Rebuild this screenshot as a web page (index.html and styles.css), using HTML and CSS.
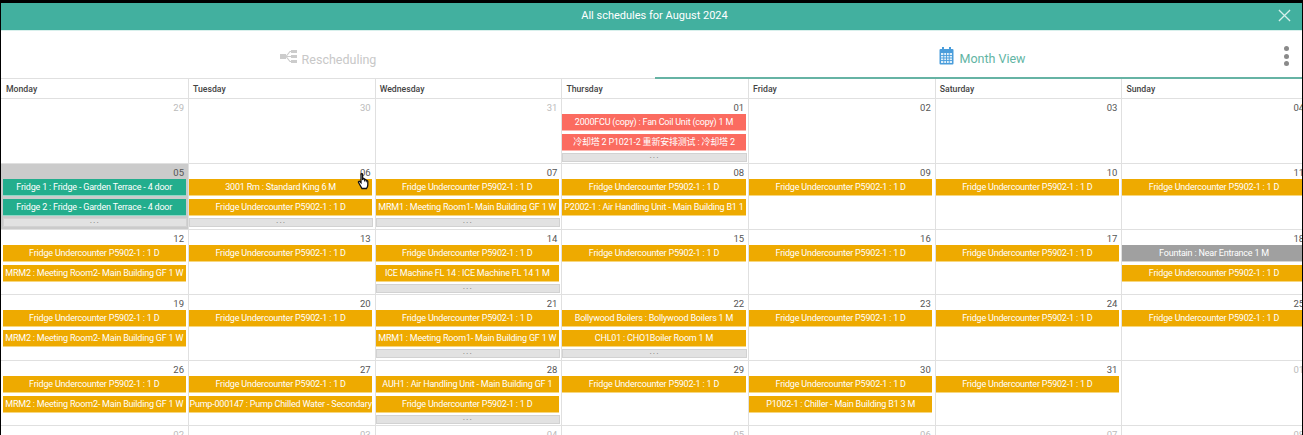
FILE: index.html
```html
<!DOCTYPE html>
<html lang="en">
<head>
    <meta charset="UTF-8">
    <meta name="viewport" content="width=device-width, initial-scale=1.0">
    <title>All schedules for August 2024</title>
    <link rel="stylesheet" href="styles.css">
</head>
<body>

<div class="app">
    <div class="title-bar">
        <span>All schedules for August 2024</span>
        <svg class="close" viewBox="0 0 14 14"><path d="M1 1L13 13M13 1L1 13"/></svg>
    </div>

    <div class="tabs">
        <div class="tab">
            <svg class="tab-icon" width="17" height="15" viewBox="0 0 17 15">
                <rect x="0" y="5" width="6" height="5" fill="#ccc"/>
                <path d="M6 7.5L10 2.5H12M6 7.5H12M6 7.5L10 12.5H12" fill="none" stroke="#ccc" stroke-width="1.2"/>
                <rect x="11" y="1" width="6" height="3" fill="#ccc"/>
                <rect x="11" y="6" width="6" height="3" fill="#ccc"/>
                <rect x="11" y="11" width="6" height="3" fill="#ccc"/>
            </svg>
            Rescheduling
        </div>
        <div class="tab active">
            <svg class="tab-icon" width="15" height="18" viewBox="0 0 15 18">
                <rect x="0.5" y="2" width="14" height="15.5" rx="1" fill="#4a9ddb"/>
                <rect x="3" y="0" width="2" height="4" fill="#4a9ddb"/>
                <rect x="10" y="0" width="2" height="4" fill="#4a9ddb"/>
                <rect x="2" y="6" width="11" height="10" fill="#dff0fa"/>
                <path d="M2 8.5H13M2 11H13M2 13.5H13M4.75 6V16M7.5 6V16M10.25 6V16" stroke="#4a9ddb" stroke-width="0.9"/>
            </svg>
            Month View
        </div>
        <div class="menu-dots"><i></i><i></i><i></i></div>
    </div>

    <div class="week-head">
        <div>Monday</div>
        <div>Tuesday</div>
        <div>Wednesday</div>
        <div>Thursday</div>
        <div>Friday</div>
        <div>Saturday</div>
        <div>Sunday</div>
    </div>

    <div class="week">
        <div class="day"><div class="num off">29</div></div>
        <div class="day"><div class="num off">30</div></div>
        <div class="day"><div class="num off">31</div></div>
        <div class="day">
            <div class="num">01</div>
            <div class="event red">2000FCU (copy) : Fan Coil Unit (copy) 1 M</div>
            <div class="event red">冷却塔 2 P1021-2 重新安排测试 : 冷却塔 2</div>
            <div class="more">...</div>
        </div>
        <div class="day"><div class="num">02</div></div>
        <div class="day"><div class="num">03</div></div>
        <div class="day"><div class="num">04</div></div>
    </div>

    <div class="week">
        <div class="day today">
            <div class="num">05</div>
            <div class="event green">Fridge 1 : Fridge - Garden Terrace - 4 door</div>
            <div class="event green">Fridge 2 : Fridge - Garden Terrace - 4 door</div>
            <div class="more">...</div>
        </div>
        <div class="day">
            <div class="num">06</div>
            <div class="event">3001 Rm : Standard King 6 M</div>
            <div class="event">Fridge Undercounter P5902-1 : 1 D</div>
            <div class="more">...</div>
            <svg class="hand" width="14" height="17" viewBox="0 0 13 17">
                <path d="M3.5 1.5c0-1 1.6-1 1.6 0V7l.3-1c.3-.8 1.5-.6 1.5.2l.2.8c.3-.8 1.5-.6 1.5.2l.2.8c.4-.7 1.5-.4 1.5.4V12c0 1.500-.6 2.500-1.300 3.500H4.500L1 9.500c-.5-.9.6-1.700 1.300-1l1.200 1.200z" fill="#fff" stroke="#111" stroke-width="1.300"/>
            </svg>
        </div>
        <div class="day">
            <div class="num">07</div>
            <div class="event">Fridge Undercounter P5902-1 : 1 D</div>
            <div class="event">MRM1 : Meeting Room1- Main Building GF 1 W</div>
            <div class="more">...</div>
        </div>
        <div class="day">
            <div class="num">08</div>
            <div class="event">Fridge Undercounter P5902-1 : 1 D</div>
            <div class="event">P2002-1 : Air Handling Unit - Main Building B1 1</div>
        </div>
        <div class="day"><div class="num">09</div><div class="event">Fridge Undercounter P5902-1 : 1 D</div></div>
        <div class="day"><div class="num">10</div><div class="event">Fridge Undercounter P5902-1 : 1 D</div></div>
        <div class="day"><div class="num">11</div><div class="event">Fridge Undercounter P5902-1 : 1 D</div></div>
    </div>

    <div class="week">
        <div class="day">
            <div class="num">12</div>
            <div class="event">Fridge Undercounter P5902-1 : 1 D</div>
            <div class="event">MRM2 : Meeting Room2- Main Building GF 1 W</div>
        </div>
        <div class="day"><div class="num">13</div><div class="event">Fridge Undercounter P5902-1 : 1 D</div></div>
        <div class="day">
            <div class="num">14</div>
            <div class="event">Fridge Undercounter P5902-1 : 1 D</div>
            <div class="event">ICE Machine FL 14 : ICE Machine FL 14 1 M</div>
            <div class="more">...</div>
        </div>
        <div class="day"><div class="num">15</div><div class="event">Fridge Undercounter P5902-1 : 1 D</div></div>
        <div class="day"><div class="num">16</div><div class="event">Fridge Undercounter P5902-1 : 1 D</div></div>
        <div class="day"><div class="num">17</div><div class="event">Fridge Undercounter P5902-1 : 1 D</div></div>
        <div class="day">
            <div class="num">18</div>
            <div class="event grey">Fountain : Near Entrance 1 M</div>
            <div class="event">Fridge Undercounter P5902-1 : 1 D</div>
        </div>
    </div>

    <div class="week">
        <div class="day">
            <div class="num">19</div>
            <div class="event">Fridge Undercounter P5902-1 : 1 D</div>
            <div class="event">MRM2 : Meeting Room2- Main Building GF 1 W</div>
        </div>
        <div class="day"><div class="num">20</div><div class="event">Fridge Undercounter P5902-1 : 1 D</div></div>
        <div class="day">
            <div class="num">21</div>
            <div class="event">Fridge Undercounter P5902-1 : 1 D</div>
            <div class="event">MRM1 : Meeting Room1- Main Building GF 1 W</div>
            <div class="more">...</div>
        </div>
        <div class="day">
            <div class="num">22</div>
            <div class="event">Bollywood Boilers : Bollywood Boilers 1 M</div>
            <div class="event">CHL01 : CHO1Boiler Room 1 M</div>
            <div class="more">...</div>
        </div>
        <div class="day"><div class="num">23</div><div class="event">Fridge Undercounter P5902-1 : 1 D</div></div>
        <div class="day"><div class="num">24</div><div class="event">Fridge Undercounter P5902-1 : 1 D</div></div>
        <div class="day"><div class="num">25</div><div class="event">Fridge Undercounter P5902-1 : 1 D</div></div>
    </div>

    <div class="week">
        <div class="day">
            <div class="num">26</div>
            <div class="event">Fridge Undercounter P5902-1 : 1 D</div>
            <div class="event">MRM2 : Meeting Room2- Main Building GF 1 W</div>
        </div>
        <div class="day">
            <div class="num">27</div>
            <div class="event">Fridge Undercounter P5902-1 : 1 D</div>
            <div class="event">Pump-000147 : Pump Chilled Water - Secondary</div>
        </div>
        <div class="day">
            <div class="num">28</div>
            <div class="event">AUH1 : Air Handling Unit - Main Building GF 1</div>
            <div class="event">Fridge Undercounter P5902-1 : 1 D</div>
            <div class="more">...</div>
        </div>
        <div class="day"><div class="num">29</div><div class="event">Fridge Undercounter P5902-1 : 1 D</div></div>
        <div class="day">
            <div class="num">30</div>
            <div class="event">Fridge Undercounter P5902-1 : 1 D</div>
            <div class="event">P1002-1 : Chiller - Main Building B1 3 M</div>
        </div>
        <div class="day"><div class="num">31</div><div class="event">Fridge Undercounter P5902-1 : 1 D</div></div>
        <div class="day"><div class="num off">01</div></div>
    </div>

    <div class="week">
        <div class="day"><div class="num off">02</div></div>
        <div class="day"><div class="num off">03</div></div>
        <div class="day"><div class="num off">04</div></div>
        <div class="day"><div class="num off">05</div></div>
        <div class="day"><div class="num off">06</div></div>
        <div class="day"><div class="num off">07</div></div>
        <div class="day"><div class="num off">08</div></div>
    </div>
</div>

</body>
</html>
```

FILE: styles.css
```css
html, body {
    height: 100%;
}

body {
    margin: 0;
    padding: 3px 1px 0 1px;
    box-sizing: border-box;
    overflow: hidden;
    background-color: #000;
    font-family: Roboto, "Noto Sans CJK SC", sans-serif;
}

.app {
    height: 432px;
    overflow: hidden;
    background-color: #fff;
}

.title-bar {
    display: flex;
    align-items: center;
    justify-content: center;
    position: relative;
    height: 28px;
    padding: 0 0 3px 6px;
    box-sizing: border-box;
    background-color: #42b09f;
    border-bottom: 1px solid #d8f0ec;
    color: #fff;
    font-size: 11px;
}

.close {
    position: absolute;
    right: 11px;
    top: 6px;
    width: 13px;
    height: 13px;
    fill: none;
    stroke: #d5f0eb;
    stroke-width: 1.4;
}

.tabs {
    display: flex;
    position: relative;
    height: 48px;
}

.tab {
    display: flex;
    align-items: center;
    justify-content: center;
    gap: 5px;
    width: 654px;
    padding-top: 8px;
    box-sizing: border-box;
    font-size: 12.500px;
    color: #c8c8c8;
}

.tab.active {
    flex: 1;
    padding-left: 8px;
    border-bottom: 2px solid #66b3a4;
    color: #62b5a4;
}

.tab-icon {
    margin-top: -5px;
}

.menu-dots {
    display: flex;
    flex-direction: column;
    gap: 2.500px;
    position: absolute;
    right: 13px;
    top: 15px;
}

.menu-dots i {
    width: 5px;
    height: 5px;
    border-radius: 50%;
    background-color: #8a8a8a;
}

.week-head,
.week {
    display: grid;
    grid-template-columns: 188px repeat(6, 186.7px);
}

.week-head {
    height: 19px;
    border-top: 1px solid #e0e0e0;
    border-bottom: 1px solid #e0e0e0;
    margin-top: -1px;
    font-size: 8.700px;
    font-weight: 500;
    line-height: 20px;
    color: #444;
}

.week-head div {
    padding-left: 4px;
    border-right: 1px solid #e0e0e0;
}

.week-head div:first-child {
    padding-left: 5px;
}

.week {
    height: 65.4px;
    box-sizing: border-box;
    border-bottom: 1px solid #e0e0e0;
}

.day {
    position: relative;
    min-width: 0;
    padding: 0 2.500px 0 0;
    border-right: 1px solid #e0e0e0;
}

.day:first-child {
    padding-left: 2px;
}

.day.today {
    background-color: #cbcbcb;
}

.num {
    height: 15px;
    padding: 2px 1.500px 0 0;
    box-sizing: border-box;
    font-size: 9.500px;
    line-height: 14px;
    text-align: right;
    color: #555;
}

.num.off {
    color: #bbb;
}

.event {
    height: 16px;
    margin-bottom: 3px;
    border-bottom: 1px solid #f7d77f;
    overflow: hidden;
    white-space: nowrap;
    background-color: #eeaa00;
    font-size: 9px;
    letter-spacing: -0.2px;
    line-height: 16px;
    text-align: center;
    color: #fff;
}

.event.green {
    background-color: #23ae8d;
    border-bottom-color: #8fd8c6;
}

.event.red {
    background-color: #fb6b60;
    border-bottom-color: #fdb5af;
}

.event.grey {
    background-color: #a0a0a0;
    border-bottom-color: #d4d4d4;
}

.more {
    height: 9px;
    margin-top: -1px;
    margin-right: -1px;
    background-color: #e2e2e2;
    border: 1px solid #d2d2d2;
    box-sizing: border-box;
    font-size: 9px;
    line-height: 3px;
    letter-spacing: 1px;
    text-align: center;
    color: #777;
}

.hand {
    position: absolute;
    right: 4px;
    top: 9px;
}
```
